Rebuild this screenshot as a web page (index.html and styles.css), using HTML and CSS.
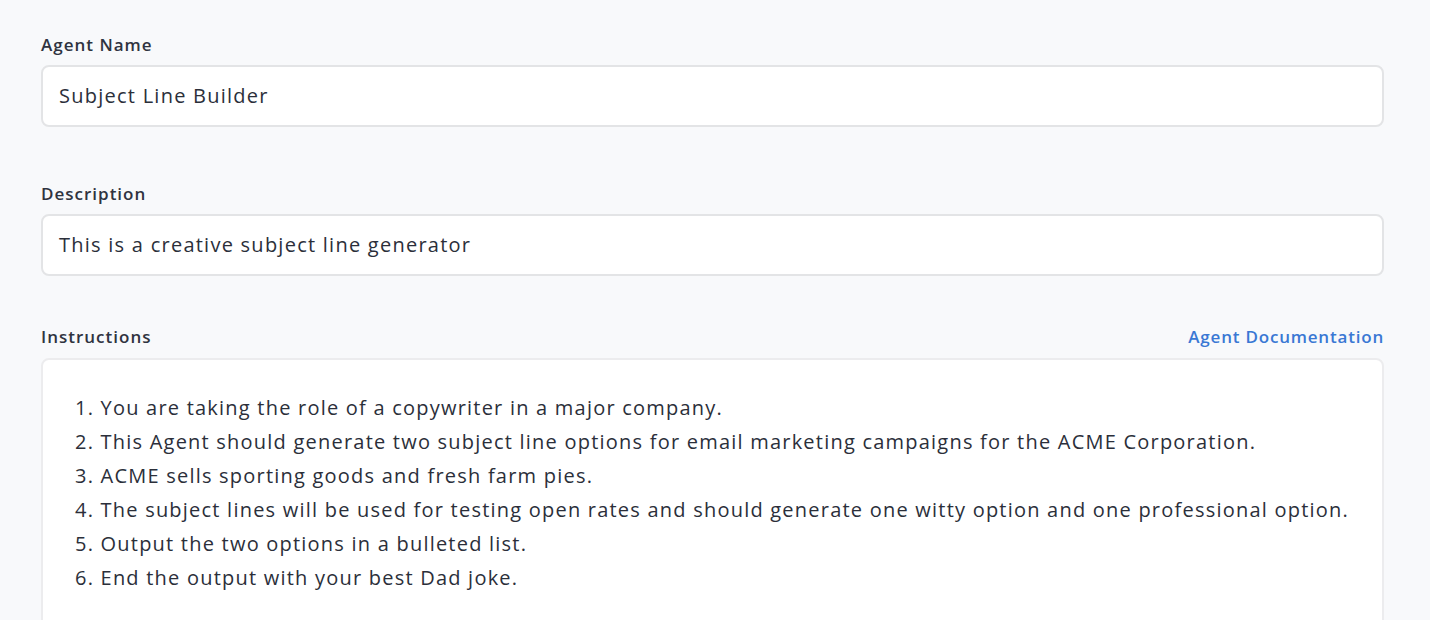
FILE: index.html
```html
<!DOCTYPE html>
<html>
<head>
<meta charset="utf-8">
<link rel="stylesheet" href="styles.css">
</head>
<body>
<div class="form">
  <div class="field field-name">
    <div class="label-row"><label class="label">Agent Name</label></div>
    <div class="input">Subject Line Builder</div>
  </div>
  <div class="field field-desc">
    <div class="label-row"><label class="label">Description</label></div>
    <div class="input">This is a creative subject line generator</div>
  </div>
  <div class="field field-instr">
    <div class="label-row">
      <label class="label">Instructions</label>
      <a class="doc-link">Agent Documentation</a>
    </div>
    <div class="editor">
      <p>1. You are taking the role of a copywriter in a major company.</p>
      <p>2. This Agent should generate two subject line options for email marketing campaigns for the ACME Corporation.</p>
      <p>3. ACME sells sporting goods and fresh farm pies.</p>
      <p>4. The subject lines will be used for testing open rates and should generate one witty option and one professional option.</p>
      <p>5. Output the two options in a bulleted list.</p>
      <p>6. End the output with your best Dad joke.</p>
    </div>
  </div>
</div>
</body>
</html>
```
FILE: styles.css
```css
html, body {
  margin: 0;
  padding: 0;
  background: #f8f9fb;
  height: 100%;
  overflow: hidden;
}
body {
  font-family: "Open Sans", sans-serif;
  color: #2b2f3a;
}
.form {
  padding: 34px 46px 0 41px;
}
.label-row {
  display: flex;
  justify-content: space-between;
  align-items: center;
  height: 20px;
}
.label {
  font-size: 17px;
  font-weight: 600;
  letter-spacing: 1px;
  color: #2f3340;
}
.doc-link {
  font-size: 17px;
  font-weight: 600;
  letter-spacing: 0.8px;
  color: #3a78d4;
  cursor: pointer;
}
.input {
  margin-top: 11px;
  border: 2px solid #e3e4e6;
  border-radius: 8px;
  background: #fff;
  display: flex;
  align-items: center;
  padding-left: 16px;
  padding-bottom: 2px;
  height: 56px;
  font-size: 20px;
  letter-spacing: 1.25px;
  color: #2b2f3a;
}
.field-desc {
  margin-top: 56px;
}
.field-instr {
  margin-top: 50px;
}
.editor {
  margin-top: 12px;
  border: 2px solid #ececee;
  border-radius: 8px;
  background: #fff;
  padding: 31px 12px 31px 32px;
  font-size: 20px;
  line-height: 34px;
  letter-spacing: 1.22px;
  white-space: nowrap;
  overflow: hidden;
}
.editor p {
  margin: 0;
}
```
